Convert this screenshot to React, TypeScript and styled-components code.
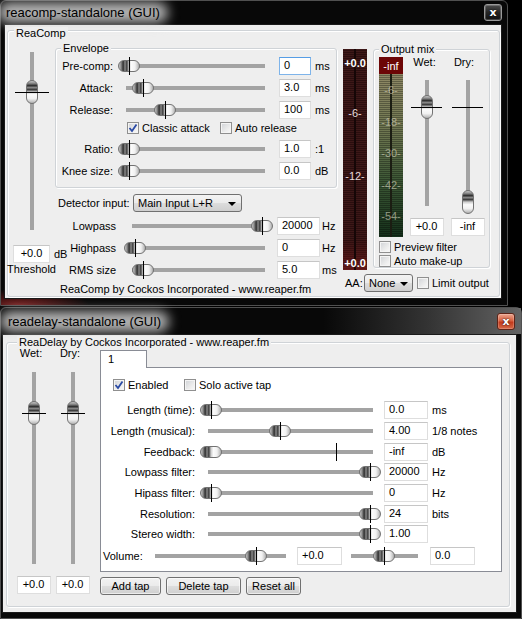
import React from 'react'
import styled, { createGlobalStyle } from 'styled-components'

const GlobalStyle = createGlobalStyle`
  * {
    box-sizing: border-box;
  }
  html,
  body {
    margin: 0;
    padding: 0;
    background: #000;
  }
  body {
    font-family: 'Liberation Sans', Arial, sans-serif;
    font-size: 11px;
    color: #000;
  }
`

const metal = (dir: string) =>
  `linear-gradient(${dir}, #c6c6c6 0%, #8e8e8e 10%, #2e2e2e 21%, #8a8a8a 30%, #3c3c3c 39%, #cdcdcd 50%, #fbfbfb 62%, #f1f1f1 80%, #b2b2b2 100%)`

// ---------- window chrome ----------

const Desktop = styled.div`
  width: 522px;
  height: 619px;
  overflow: hidden;
  background: #000;
  display: flex;
  flex-direction: column;
  align-items: flex-start;
`

const WindowFrame = styled.div<{ $w: number; $h: number; $mt: number; $tint?: boolean }>`
  width: ${({ $w }) => $w}px;
  height: ${({ $h }) => $h}px;
  margin-top: ${({ $mt }) => $mt}px;
  flex-shrink: 0;
  display: flex;
  flex-direction: column;
  border: 1px solid #505050;
  border-radius: 6px 6px 0 0;
  background: ${({ $tint }) =>
    $tint
      ? 'radial-gradient(70px 16px at 18px 100%, rgba(150, 34, 34, 0.75), rgba(150, 34, 34, 0) 100%), #080808'
      : '#080808'};
`

const TitleBar = styled.div<{ $h: number; $pl: number; $pr: number; $glass?: boolean }>`
  height: ${({ $h }) => $h}px;
  flex-shrink: 0;
  display: flex;
  align-items: center;
  justify-content: space-between;
  padding: 0 ${({ $pr }) => $pr}px 0 ${({ $pl }) => $pl}px;
  background: ${({ $glass }) =>
    $glass
      ? 'linear-gradient(90deg, rgba(0,0,0,0) 0%, rgba(0,0,0,0) 62%, rgba(80,80,80,0.6) 82%, rgba(115,115,115,0.85) 100%)'
      : 'transparent'};
`

const Title = styled.span`
  position: relative;
  isolation: isolate;
  font-size: 13px;
  color: #000;
  white-space: nowrap;

  &::before {
    content: '';
    position: absolute;
    left: -8px;
    right: -8px;
    top: -3px;
    bottom: -3px;
    background: rgba(210, 210, 210, 0.85);
    border-radius: 10px;
    filter: blur(6px);
    z-index: -1;
  }
`

const CloseButton = styled.div<{ $red?: boolean }>`
  width: 18px;
  height: 17px;
  display: flex;
  align-items: center;
  justify-content: center;
  border: 1px solid ${({ $red }) => ($red ? '#5e2418' : '#9a9a9a')};
  border-radius: 3px;
  color: #fff;
  font-family: 'DejaVu Sans', sans-serif;
  font-weight: bold;
  font-size: 11px;
  line-height: 1;
  background: ${({ $red }) =>
    $red
      ? 'linear-gradient(#eaa58f 0%, #d8603f 45%, #c43a1c 55%, #d66a48 100%)'
      : 'linear-gradient(#4c4c4c 0%, #262626 50%, #111 100%)'};
  box-shadow: inset 0 0 0 1px rgba(255, 255, 255, 0.2);
  text-shadow: 0 0 2px #000;
`

const Client = styled.div<{ $w: number; $h: number; $ml: number }>`
  width: ${({ $w }) => $w}px;
  height: ${({ $h }) => $h}px;
  margin-left: ${({ $ml }) => $ml}px;
  flex-shrink: 0;
  border: 1px solid #1a1a1a;
  background: #eeeeee;
  display: flex;
  align-items: flex-start;
`

// ---------- generic controls ----------

const GroupBox = styled.div<{ $w: number; $h: number; $mt?: number; $ml?: number; $col?: boolean }>`
  position: relative;
  flex-shrink: 0;
  width: ${({ $w }) => $w}px;
  height: ${({ $h }) => $h}px;
  margin-top: ${({ $mt }) => $mt ?? 0}px;
  margin-left: ${({ $ml }) => $ml ?? 0}px;
  display: flex;
  flex-direction: ${({ $col }) => ($col ? 'column' : 'row')};
  align-items: flex-start;
  border: 1px solid #cfd3d7;
  border-radius: 3px;
  box-shadow: inset 1px 1px 0 #fff, 1px 1px 0 #fff;
`

const GroupLabel = styled.span<{ $left: number; $top: number }>`
  position: absolute;
  left: ${({ $left }) => $left}px;
  top: ${({ $top }) => $top}px;
  padding: 0 2px;
  line-height: 13px;
  background: #eeeeee;
  white-space: nowrap;
`

const Row = styled.div<{ $h: number; $mt?: number; $pl?: number }>`
  display: flex;
  align-items: center;
  flex-shrink: 0;
  height: ${({ $h }) => $h}px;
  margin-top: ${({ $mt }) => $mt ?? 0}px;
  padding-left: ${({ $pl }) => $pl ?? 0}px;
`

const Label = styled.span<{ $w: number; $ml?: number; $left?: boolean }>`
  width: ${({ $w }) => $w}px;
  margin-left: ${({ $ml }) => $ml ?? 0}px;
  flex-shrink: 0;
  text-align: ${({ $left }) => ($left ? 'left' : 'right')};
  white-space: nowrap;
`

const Units = styled.span<{ $ml: number }>`
  margin-left: ${({ $ml }) => $ml}px;
  white-space: nowrap;
  flex-shrink: 0;
`

const TextBox = styled.div<{ $w: number; $ml?: number; $mt?: number; $center?: boolean; $focus?: boolean }>`
  width: ${({ $w }) => $w}px;
  height: 18px;
  flex-shrink: 0;
  margin-left: ${({ $ml }) => $ml ?? 0}px;
  margin-top: ${({ $mt }) => $mt ?? 0}px;
  padding: 0 4px;
  line-height: 15px;
  background: #fff;
  border: 1px solid ${({ $focus }) => ($focus ? '#7eb4ea' : '#dedede')};
  border-top-color: ${({ $focus }) => ($focus ? '#569de5' : '#c6c6c6')};
  text-align: ${({ $center }) => ($center ? 'center' : 'left')};
  white-space: nowrap;
`

const Combo = styled.div<{ $w: number; $arrow: number }>`
  position: relative;
  width: ${({ $w }) => $w}px;
  height: 18px;
  flex-shrink: 0;
  padding-left: 4px;
  line-height: 16px;
  white-space: nowrap;
  border: 1px solid #707070;
  border-radius: 3px;
  background: linear-gradient(#f3f3f3 0%, #ebebeb 48%, #dcdcdc 52%, #cfcfcf 100%);

  &::after {
    content: '';
    position: absolute;
    right: ${({ $arrow }) => $arrow}px;
    top: 7px;
    border-left: 4px solid transparent;
    border-right: 4px solid transparent;
    border-top: 4px solid #000;
  }
`

const PushButton = styled.div<{ $w: number; $ml?: number }>`
  width: ${({ $w }) => $w}px;
  height: 18px;
  margin-left: ${({ $ml }) => $ml ?? 0}px;
  flex-shrink: 0;
  display: flex;
  align-items: center;
  justify-content: center;
  border: 1px solid #707070;
  border-radius: 3px;
  background: linear-gradient(#f2f2f2 0%, #ebebeb 48%, #dddddd 52%, #cfcfcf 100%);
  box-shadow: inset 0 0 0 1px rgba(255, 255, 255, 0.6);
`

const CheckItem = styled.div<{ $w?: number; $ml?: number }>`
  display: flex;
  align-items: center;
  flex-shrink: 0;
  white-space: nowrap;
  width: ${({ $w }) => ($w ? `${$w}px` : 'auto')};
  margin-left: ${({ $ml }) => $ml ?? 0}px;
`

const CheckSquare = styled.span`
  width: 12px;
  height: 12px;
  flex-shrink: 0;
  display: flex;
  align-items: center;
  justify-content: center;
  border: 1px solid #8f8f8f;
  background: linear-gradient(135deg, #cfd2d6 0%, #ececec 60%, #fafafa 100%);
  box-shadow: inset 0 0 0 1px #f4f4f4;
`

const CheckText = styled.span`
  margin-left: 3px;
`

const Check = ({ label, checked, w, ml }: { label: string; checked?: boolean; w?: number; ml?: number }) => (
  <CheckItem $w={w} $ml={ml}>
    <CheckSquare>
      {checked && (
        <svg width="10" height="10" viewBox="0 0 10 10">
          <polyline points="1.5,5 4,8 8.5,1.5" fill="none" stroke="#2b4ba5" strokeWidth="1.8" />
        </svg>
      )}
    </CheckSquare>
    <CheckText>{label}</CheckText>
  </CheckItem>
)

// ---------- sliders ----------

const HSliderBox = styled.div<{ $w: number; $ml: number }>`
  position: relative;
  width: ${({ $w }) => $w}px;
  height: 18px;
  margin-left: ${({ $ml }) => $ml}px;
  flex-shrink: 0;
  padding: 0 8px;
  display: flex;
  align-items: center;
`

const HTrack = styled.div`
  flex: 1;
  height: 4px;
  background: #a3a3a3;
`

const HThumb = styled.div`
  position: absolute;
  top: 3px;
  width: 22px;
  height: 12px;
  border: 1px solid #727272;
  border-radius: 6px;
  background: ${metal('to right')};
`

const HTick = styled.div`
  position: absolute;
  top: 0;
  width: 1px;
  height: 18px;
  background: #000;
`

const HSlider = ({ w, ml = 0, value, tick }: { w: number; ml?: number; value: number; tick?: number }) => {
  const range = w - 22
  return (
    <HSliderBox $w={w} $ml={ml}>
      <HTrack />
      <HThumb style={{ left: value * range }} />
      {tick !== undefined && <HTick style={{ left: 11 + tick * range }} />}
    </HSliderBox>
  )
}

const VSliderBox = styled.div<{ $w: number; $h: number; $mt: number }>`
  position: relative;
  width: ${({ $w }) => $w}px;
  height: ${({ $h }) => $h}px;
  margin-top: ${({ $mt }) => $mt}px;
  flex-shrink: 0;
  padding: 8px 0;
  display: flex;
  justify-content: center;
`

const VTrack = styled.div`
  width: 4px;
  background: #a3a3a3;
`

const VThumb = styled.div`
  position: absolute;
  left: 50%;
  width: 12px;
  height: 24px;
  margin-left: -6px;
  border: 1px solid #727272;
  border-radius: 6px;
  background: ${metal('to bottom')};
`

const VTick = styled.div<{ $len: number }>`
  position: absolute;
  left: 50%;
  height: 1px;
  width: ${({ $len }) => $len}px;
  margin-left: ${({ $len }) => -$len / 2}px;
  background: #000;
`

const VSlider = ({
  w,
  h,
  mt,
  value,
  tick,
  tickLen,
}: {
  w: number
  h: number
  mt: number
  value: number
  tick: number
  tickLen: number
}) => {
  const range = h - 24
  return (
    <VSliderBox $w={w} $h={h} $mt={mt}>
      <VTrack />
      <VThumb style={{ top: value * range }} />
      <VTick $len={tickLen} style={{ top: 12 + tick * range }} />
    </VSliderBox>
  )
}

// ---------- meters ----------

const MeterText = styled.text<{ $bold?: boolean; $fill: string }>`
  font-family: 'Liberation Sans', Arial, sans-serif;
  font-size: 11px;
  font-weight: ${({ $bold }) => ($bold ? 'bold' : 'normal')};
  fill: ${({ $fill }) => $fill};
  text-anchor: middle;
  dominant-baseline: central;
`

const InputMeter = () => (
  <svg width="24" height="221" viewBox="0 0 24 221" style={{ flexShrink: 0 }}>
    <defs>
      <pattern id="inStripe" width="24" height="2" patternUnits="userSpaceOnUse">
        <rect width="24" height="1" fill="#3d1818" />
        <rect y="1" width="24" height="1" fill="#2a0e0e" />
      </pattern>
      <linearGradient id="inGlow" x1="0" y1="0" x2="0" y2="1">
        <stop offset="0" stopColor="#7a1a1a" stopOpacity="0" />
        <stop offset="0.86" stopColor="#7a1a1a" stopOpacity="0" />
        <stop offset="1" stopColor="#8a1c1c" stopOpacity="0.5" />
      </linearGradient>
    </defs>
    <rect width="24" height="221" fill="url(#inStripe)" />
    <rect width="24" height="221" fill="url(#inGlow)" />
    <rect x="11" width="2" height="221" fill="#150606" />
    <MeterText x="12" y="14" $bold $fill="#ffffff">+0.0</MeterText>
    <MeterText x="12" y="64" $fill="#e6dada">-6-</MeterText>
    <MeterText x="12" y="127" $fill="#e6dada">-12-</MeterText>
    <MeterText x="12" y="214" $bold $fill="#ffffff">+0.0</MeterText>
  </svg>
)

const grLabels = [
  { y: 33, text: '-6-' },
  { y: 65, text: '-18-' },
  { y: 96, text: '-30-' },
  { y: 128, text: '-42-' },
  { y: 159, text: '-54-' },
]

const GainMeter = () => (
  <svg width="24" height="180" viewBox="0 0 24 180" style={{ flexShrink: 0, marginLeft: 5, marginTop: 7 }}>
    <defs>
      <linearGradient id="grBody" x1="0" y1="0" x2="0" y2="1">
        <stop offset="0" stopColor="#8e8865" />
        <stop offset="0.35" stopColor="#6e7650" />
        <stop offset="0.65" stopColor="#3d5836" />
        <stop offset="1" stopColor="#14301a" />
      </linearGradient>
      <pattern id="grStripe" width="24" height="2" patternUnits="userSpaceOnUse">
        <rect width="24" height="1" fill="#000" fillOpacity="0.3" />
      </pattern>
    </defs>
    <rect y="17" width="24" height="163" fill="url(#grBody)" />
    <rect y="17" width="24" height="163" fill="url(#grStripe)" />
    <rect x="11" y="17" width="2" height="163" fill="#1b1d12" />
    <rect width="24" height="17" fill="#6c0606" />
    <MeterText x="12" y="9" $fill="#ffffff">-inf</MeterText>
    {grLabels.map(l => (
      <MeterText key={l.text} x="12" y={l.y} $fill="rgba(225, 222, 200, 0.6)">
        {l.text}
      </MeterText>
    ))}
  </svg>
)

// ---------- ReaComp layout ----------

const ThresholdCol = styled.div`
  width: 47px;
  flex-shrink: 0;
  display: flex;
  flex-direction: column;
  align-items: center;
`

const BoxRow = styled.div<{ $mt: number }>`
  align-self: flex-start;
  display: flex;
  align-items: center;
  height: 18px;
  margin-top: ${({ $mt }) => $mt}px;
`

const Caption = styled.div`
  line-height: 13px;
  white-space: nowrap;
`

const Column = styled.div<{ $w?: number; $ml?: number }>`
  width: ${({ $w }) => ($w ? `${$w}px` : 'auto')};
  margin-left: ${({ $ml }) => $ml ?? 0}px;
  flex-shrink: 0;
  display: flex;
  flex-direction: column;
  align-items: flex-start;
`

const TopRow = styled.div<{ $mt?: number }>`
  display: flex;
  align-items: flex-start;
  margin-top: ${({ $mt }) => $mt ?? 0}px;
`

const Footer = styled.div`
  margin: 2px 0 0 5px;
  line-height: 12px;
  white-space: nowrap;
`

const MixCol = styled.div<{ $w: number; $ml?: number }>`
  width: ${({ $w }) => $w}px;
  margin-left: ${({ $ml }) => $ml ?? 0}px;
  flex-shrink: 0;
  display: flex;
  flex-direction: column;
  align-items: center;
`

const MixLabel = styled.div<{ $mt: number; $pr: number }>`
  align-self: stretch;
  margin-top: ${({ $mt }) => $mt}px;
  padding-right: ${({ $pr }) => $pr}px;
  line-height: 12px;
  text-align: center;
`

const envelopeRows = [
  { label: 'Pre-comp:', value: 0, text: '0', unit: 'ms', focus: true },
  { label: 'Attack:', value: 0.105, text: '3.0', unit: 'ms' },
  { label: 'Release:', value: 0.27, text: '100', unit: 'ms' },
]

const shapeRows = [
  { label: 'Ratio:', value: 0, text: '1.0', unit: ':1' },
  { label: 'Knee size:', value: 0, text: '0.0', unit: 'dB' },
]

const filterRows = [
  { label: 'Lowpass', value: 1, text: '20000', unit: 'Hz' },
  { label: 'Highpass', value: 0, text: '0', unit: 'Hz' },
  { label: 'RMS size', value: 0.063, text: '5.0', unit: 'ms' },
]

type SliderRowData = { label: string; value: number; text: string; unit: string; focus?: boolean; tick?: number }

const EnvelopeRow = ({ row, mt }: { row: SliderRowData; mt?: number }) => (
  <Row $h={22} $mt={mt}>
    <Label $w={57}>{row.label}</Label>
    <HSlider w={155} ml={5} value={row.value} tick={row.value} />
    <TextBox $w={32} $ml={6} $focus={row.focus}>
      {row.text}
    </TextBox>
    <Units $ml={4}>{row.unit}</Units>
  </Row>
)

const ReaComp = () => (
  <GroupBox $w={493} $h={267} $mt={5} $ml={2}>
    <GroupLabel $left={6} $top={-4}>
      ReaComp
    </GroupLabel>

    <ThresholdCol>
      <VSlider w={47} h={194} mt={13} value={0.21} tick={0.21} tickLen={34} />
      <BoxRow $mt={7}>
        <TextBox $w={37} $ml={5} $center>
          +0.0
        </TextBox>
        <Units $ml={4}>dB</Units>
      </BoxRow>
      <Caption>Threshold</Caption>
    </ThresholdCol>

    <Column $w={282}>
      <GroupBox $w={282} $h={140} $mt={17} $col>
        <GroupLabel $left={5} $top={-7}>
          Envelope
        </GroupLabel>
        {envelopeRows.map((r, i) => (
          <EnvelopeRow key={r.label} row={r} mt={i === 0 ? 6 : 0} />
        ))}
        <Row $h={14} $pl={71}>
          <Check label="Classic attack" checked w={93} />
          <Check label="Auto release" />
        </Row>
        {shapeRows.map((r, i) => (
          <EnvelopeRow key={r.label} row={r} mt={i === 0 ? 3 : 0} />
        ))}
      </GroupBox>

      <Row $h={18} $mt={6}>
        <Label $w={75} $ml={3} $left>
          Detector input:
        </Label>
        <Combo $w={109} $arrow={5}>
          Main Input L+R
        </Combo>
      </Row>

      {filterRows.map((r, i) => (
        <Row key={r.label} $h={22} $mt={i === 0 ? 3 : 0}>
          <Label $w={61}>{r.label}</Label>
          <HSlider w={149} ml={8} value={r.value} tick={r.value} />
          <TextBox $w={43} $ml={4}>
            {r.text}
          </TextBox>
          <Units $ml={2}>{r.unit}</Units>
        </Row>
      ))}

      <Footer>ReaComp by Cockos Incorporated - www.reaper.fm</Footer>
    </Column>

    <Column $ml={6}>
      <TopRow $mt={18}>
        <InputMeter />
        <GroupBox $w={117} $h={219} $ml={6} $col>
          <GroupLabel $left={5} $top={-7}>
            Output mix
          </GroupLabel>
          <TopRow>
            <GainMeter />
            <TopRow style={{ marginLeft: 3 }}>
              <MixCol $w={41}>
                <MixLabel $mt={6} $pr={4}>
                  Wet:
                </MixLabel>
                <VSlider w={41} h={142} mt={4} value={0.195} tick={0.195} tickLen={31} />
                <TextBox $w={34} $mt={4} $center>
                  +0.0
                </TextBox>
              </MixCol>
              <MixCol $w={41}>
                <MixLabel $mt={6} $pr={7}>
                  Dry:
                </MixLabel>
                <VSlider w={41} h={142} mt={4} value={1} tick={0.195} tickLen={31} />
                <TextBox $w={34} $mt={4} $center>
                  -inf
                </TextBox>
              </MixCol>
            </TopRow>
          </TopRow>
          <Row $h={12} $mt={4} $pl={5}>
            <Check label="Preview filter" />
          </Row>
          <Row $h={12} $mt={2} $pl={5}>
            <Check label="Auto make-up" />
          </Row>
        </GroupBox>
      </TopRow>
      <Row $h={18} $mt={4}>
        <Label $w={19} $ml={2} $left>
          AA:
        </Label>
        <Combo $w={49} $arrow={4}>
          None
        </Combo>
        <Check label="Limit output" ml={4} />
      </Row>
    </Column>
  </GroupBox>
)

// ---------- ReaDelay layout ----------

const TabStrip = styled.div`
  display: flex;
  margin-top: 7px;
`

const Tab = styled.div<{ $w: number }>`
  position: relative;
  z-index: 1;
  width: ${({ $w }) => $w}px;
  height: 18px;
  padding-left: 7px;
  line-height: 17px;
  background: #fff;
  border: 1px solid #898c95;
  border-bottom: none;
`

const TabPanel = styled.div<{ $w: number; $h: number }>`
  width: ${({ $w }) => $w}px;
  height: ${({ $h }) => $h}px;
  margin-top: -1px;
  display: flex;
  flex-direction: column;
  align-items: flex-start;
  background: #fff;
  border: 1px solid #898c95;
`

const ButtonRow = styled.div`
  display: flex;
  margin-top: 5px;
`

const tapRows = [
  { label: 'Length (time):', value: 0, tick: 0, text: '0.0', unit: 'ms' },
  { label: 'Length (musical):', value: 0.434, tick: 0.434, text: '4.00', unit: '1/8 notes' },
  { label: 'Feedback:', value: 0, tick: 0.786, text: '-inf', unit: 'dB' },
  { label: 'Lowpass filter:', value: 1, tick: 1, text: '20000', unit: 'Hz' },
  { label: 'Hipass filter:', value: 0, tick: 0, text: '0', unit: 'Hz' },
  { label: 'Resolution:', value: 1, tick: 1, text: '24', unit: 'bits' },
  { label: 'Stereo width:', value: 1, tick: 1, text: '1.00', unit: '' },
]

const ReaDelay = () => (
  <GroupBox $w={504} $h={265} $mt={7} $ml={3}>
    <GroupLabel $left={10} $top={-7}>
      ReaDelay by Cockos Incorporated - www.reaper.fm
    </GroupLabel>

    <MixCol $w={37} $ml={8}>
      <MixLabel $mt={4} $pr={5}>
        Wet:
      </MixLabel>
      <VSlider w={37} h={208} mt={5} value={0.201} tick={0.201} tickLen={24} />
      <TextBox $w={34} $mt={4} $center>
        +0.0
      </TextBox>
    </MixCol>
    <MixCol $w={37} $ml={2}>
      <MixLabel $mt={4} $pr={5}>
        Dry:
      </MixLabel>
      <VSlider w={37} h={208} mt={5} value={0.201} tick={0.201} tickLen={24} />
      <TextBox $w={34} $mt={4} $center>
        +0.0
      </TextBox>
    </MixCol>

    <Column $ml={9}>
      <TabStrip>
        <Tab $w={47}>1</Tab>
      </TabStrip>
      <TabPanel $w={402} $h={205}>
        <Row $h={12} $mt={11} $pl={12}>
          <Check label="Enabled" checked w={71} />
          <Check label="Solo active tap" />
        </Row>
        {tapRows.map((r, i) => (
          <Row key={r.label} $h={20.7} $mt={i === 0 ? 9 : 0}>
            <Label $w={94}>{r.label}</Label>
            <HSlider w={181} ml={5} value={r.value} tick={r.tick} />
            <TextBox $w={44} $ml={3}>
              {r.text}
            </TextBox>
            <Units $ml={4}>{r.unit}</Units>
          </Row>
        ))}
        <Row $h={20} $mt={1}>
          <Label $w={44} $ml={2} $left>
            Volume:
          </Label>
          <HSlider w={147} value={0.784} tick={0.78} />
          <TextBox $w={45} $ml={3}>
            +0.0
          </TextBox>
          <HSlider w={83} ml={1} value={0.49} tick={0.49} />
          <TextBox $w={45} $ml={4}>
            0.0
          </TextBox>
        </Row>
      </TabPanel>
      <ButtonRow>
        <PushButton $w={61}>Add tap</PushButton>
        <PushButton $w={75} $ml={5}>
          Delete tap
        </PushButton>
        <PushButton $w={55} $ml={5}>
          Reset all
        </PushButton>
      </ButtonRow>
    </Column>
  </GroupBox>
)

const App = () => (
  <>
    <GlobalStyle />
    <Desktop>
      <WindowFrame $w={508} $h={306} $mt={0} $tint>
        <TitleBar $h={23} $pl={5} $pr={5}>
          <Title>reacomp-standalone (GUI)</Title>
          <CloseButton>x</CloseButton>
        </TitleBar>
        <Client $w={498} $h={275} $ml={3}>
          <ReaComp />
        </Client>
      </WindowFrame>

      <WindowFrame $w={522} $h={312} $mt={1}>
        <TitleBar $h={26} $pl={7} $pr={6} $glass>
          <Title>readelay-standalone (GUI)</Title>
          <CloseButton $red>x</CloseButton>
        </TitleBar>
        <Client $w={515} $h={279} $ml={1}>
          <ReaDelay />
        </Client>
      </WindowFrame>
    </Desktop>
  </>
)

export default App
